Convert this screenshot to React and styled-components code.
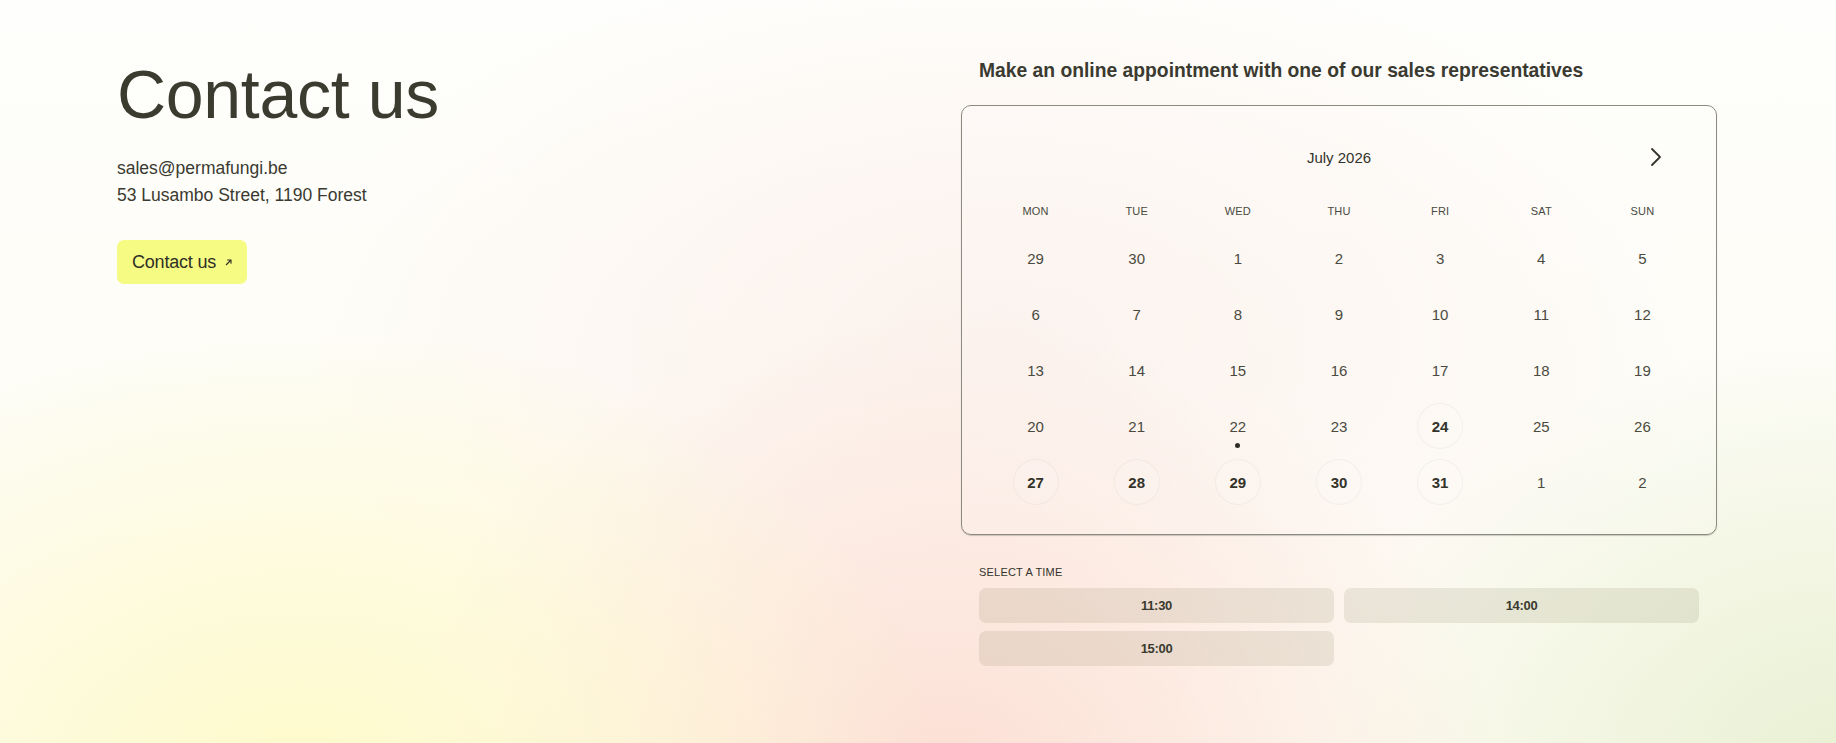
import React from "react";
import styled, { createGlobalStyle } from "styled-components";

const GlobalStyle = createGlobalStyle`
  html, body {
    margin: 0;
    padding: 0;
  }
  body {
    min-height: 100vh;
    font-family: "Liberation Sans", Arial, sans-serif;
    color: #3a3a30;
    background:
      radial-gradient(ellipse 640px 460px at 300px 780px, rgba(255, 250, 200, 0.95), rgba(255, 250, 200, 0) 100%),
      radial-gradient(ellipse 560px 470px at 940px 790px, rgba(252, 220, 210, 0.95), rgba(252, 220, 210, 0) 100%),
      radial-gradient(ellipse 520px 420px at 1836px 760px, rgba(232, 240, 210, 0.95), rgba(232, 240, 210, 0) 100%),
      radial-gradient(ellipse 700px 400px at 1000px 340px, rgba(250, 232, 226, 0.55), rgba(250, 232, 226, 0) 100%),
      linear-gradient(180deg, #fefefc 0%, #fdfbf2 100%);
  }
`;

const days = ["MON", "TUE", "WED", "THU", "FRI", "SAT", "SUN"];

// July 2026 laid out Monday-first, with the trailing days of June and August
const weeks = [
  [29, 30, 1, 2, 3, 4, 5],
  [6, 7, 8, 9, 10, 11, 12],
  [13, 14, 15, 16, 17, 18, 19],
  [20, 21, 22, 23, 24, 25, 26],
  [27, 28, 29, 30, 31, 1, 2],
];

const available = new Set(["3-4", "4-0", "4-1", "4-2", "4-3", "4-4"]);
const today = "3-2";

const times = ["11:30", "14:00", "15:00"];

const Page = styled.main`
  display: grid;
  grid-template-columns: 1fr 720px;
  padding: 60px 137px 0 117px;
  min-height: 743px;
  box-sizing: border-box;
`;

const Intro = styled.section`
  display: flex;
  flex-direction: column;
  align-items: flex-start;
`;

const Heading = styled.h1`
  margin: 0;
  font-size: 68px;
  line-height: 1;
  font-weight: 400;
  letter-spacing: -0.3px;
  color: #3b3b30;
`;

const Details = styled.p`
  margin: 27px 0 0;
  font-size: 17.5px;
  line-height: 27px;
  letter-spacing: 0;
`;

const CtaButton = styled.a`
  margin-top: 31px;
  display: inline-flex;
  align-items: center;
  gap: 9px;
  height: 44px;
  padding: 0 15px;
  box-sizing: border-box;
  background: #f6fb84;
  border-radius: 7px;
  font-size: 18px;
  color: #2f2f26;
  text-decoration: none;
  letter-spacing: -0.2px;
`;

const Booking = styled.section`
  display: flex;
  flex-direction: column;
`;

const BookingTitle = styled.h2`
  margin: 0;
  font-size: 19.3px;
  line-height: 22px;
  font-weight: 700;
  color: #3a3a30;
`;

const Calendar = styled.div`
  margin: 23px -18px 0;
  padding: 31px 23px 24px;
  border: 1px solid #8c8b82;
  border-radius: 10px;
  box-shadow: 0 1px 1px rgba(60, 60, 50, 0.25);
  background: rgba(255, 255, 255, 0.12);
`;

const MonthBar = styled.div`
  display: grid;
  grid-template-columns: 1fr auto 1fr;
  align-items: center;
  height: 40px;
`;

const MonthName = styled.span`
  grid-column: 2;
  font-size: 15px;
  font-weight: 500;
  color: #33332a;
`;

const NextButton = styled.button`
  justify-self: end;
  margin-right: 26px;
  display: flex;
  align-items: center;
  justify-content: center;
  width: 22px;
  height: 28px;
  padding: 0;
  border: 0;
  background: none;
  color: #33332a;
  cursor: pointer;
`;

const WeekGrid = styled.div`
  display: grid;
  grid-template-columns: repeat(7, 1fr);
`;

const WeekdayRow = styled(WeekGrid)`
  margin-top: 24px;
  height: 20px;
  align-items: center;
  margin-bottom: 9px;
`;

const Weekday = styled.span`
  text-align: center;
  font-size: 11px;
  letter-spacing: 0.2px;
  color: #4a4a40;
`;

const DayRow = styled(WeekGrid)`
  height: 56px;
  align-items: center;
`;

const DayCell = styled.div`
  position: relative;
  justify-self: center;
  display: flex;
  align-items: center;
  justify-content: center;
  width: 46px;
  height: 46px;
  border-radius: 50%;
  box-sizing: border-box;
  font-size: 15px;
  font-weight: ${({ $open }) => ($open ? 700 : 400)};
  color: ${({ $open }) => ($open ? "#33332a" : "#4a4a40")};
  border: 1px solid ${({ $open }) => ($open ? "rgba(120, 110, 90, 0.07)" : "transparent")};
  background: ${({ $open }) => ($open ? "rgba(255, 255, 255, 0.1)" : "transparent")};
`;

const TodayDot = styled.span`
  position: absolute;
  left: 50%;
  top: 39px;
  width: 5px;
  height: 5px;
  margin-left: -2.5px;
  border-radius: 50%;
  background: #2e2e25;
`;

const TimeLabel = styled.h3`
  margin: 30px 0 0;
  font-size: 11px;
  line-height: 14px;
  font-weight: 500;
  letter-spacing: 0.2px;
  color: #33332a;
`;

const TimeGrid = styled.div`
  margin-top: 9px;
  display: grid;
  grid-template-columns: 1fr 1fr;
  gap: 8px 10px;
`;

const TimeSlot = styled.button`
  height: 35px;
  border: 0;
  border-radius: 7px;
  background: rgba(110, 95, 60, 0.12);
  font-family: inherit;
  font-size: 13px;
  font-weight: 700;
  letter-spacing: -0.3px;
  color: #3a3a30;
  cursor: pointer;
`;

function ChevronRight() {
  return (
    <svg width="12" height="20" viewBox="0 0 12 20" fill="none">
      <path d="M2 2l8 8-8 8" stroke="currentColor" strokeWidth="1.8" strokeLinecap="round" strokeLinejoin="round" />
    </svg>
  );
}

function ArrowUpRight() {
  return (
    <svg width="7" height="7" viewBox="0 0 7 7" fill="none">
      <path d="M1 6l5-5M2.2 1H6v3.8" stroke="currentColor" strokeWidth="1.1" />
    </svg>
  );
}

function App() {
  return (
    <>
      <GlobalStyle />
      <Page>
        <Intro>
          <Heading>Contact us</Heading>
          <Details>
            sales@permafungi.be
            <br />
            53 Lusambo Street, 1190 Forest
          </Details>
          <CtaButton href="#contact">
            Contact us <ArrowUpRight />
          </CtaButton>
        </Intro>

        <Booking>
          <BookingTitle>Make an online appointment with one of our sales representatives</BookingTitle>
          <Calendar>
            <MonthBar>
              <MonthName>July 2026</MonthName>
              <NextButton aria-label="Next month">
                <ChevronRight />
              </NextButton>
            </MonthBar>
            <WeekdayRow>
              {days.map(d => (
                <Weekday key={d}>{d}</Weekday>
              ))}
            </WeekdayRow>
            {weeks.map((week, w) => (
              <DayRow key={w}>
                {week.map((day, i) => {
                  const key = `${w}-${i}`;
                  return (
                    <DayCell key={key} $open={available.has(key)}>
                      {day}
                      {key === today && <TodayDot />}
                    </DayCell>
                  );
                })}
              </DayRow>
            ))}
          </Calendar>

          <TimeLabel>SELECT A TIME</TimeLabel>
          <TimeGrid>
            {times.map(t => (
              <TimeSlot key={t}>{t}</TimeSlot>
            ))}
          </TimeGrid>
        </Booking>
      </Page>
    </>
  );
}

export default App;
